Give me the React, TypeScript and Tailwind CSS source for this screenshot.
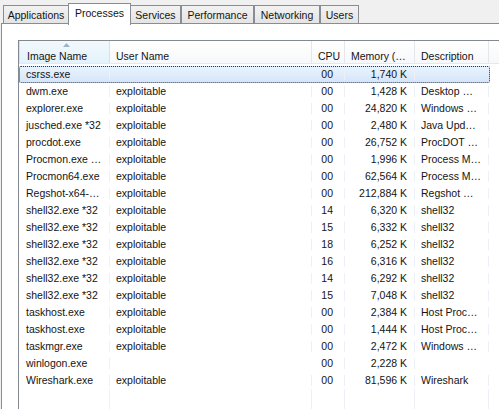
import React from 'react';

// Windows 7 Task Manager – Processes tab

type Proc = {
  image: string;
  user: string;
  cpu: string;
  mem: string;
  desc: string;
};

const PROCS: Proc[] = [
  { image: 'csrss.exe', user: '', cpu: '00', mem: '1,740 K', desc: '' },
  { image: 'dwm.exe', user: 'exploitable', cpu: '00', mem: '1,428 K', desc: 'Desktop …' },
  { image: 'explorer.exe', user: 'exploitable', cpu: '00', mem: '24,820 K', desc: 'Windows …' },
  { image: 'jusched.exe *32', user: 'exploitable', cpu: '00', mem: '2,480 K', desc: 'Java Upd…' },
  { image: 'procdot.exe', user: 'exploitable', cpu: '00', mem: '26,752 K', desc: 'ProcDOT …' },
  { image: 'Procmon.exe …', user: 'exploitable', cpu: '00', mem: '1,996 K', desc: 'Process M…' },
  { image: 'Procmon64.exe', user: 'exploitable', cpu: '00', mem: '62,564 K', desc: 'Process M…' },
  { image: 'Regshot-x64-…', user: 'exploitable', cpu: '00', mem: '212,884 K', desc: 'Regshot …' },
  { image: 'shell32.exe *32', user: 'exploitable', cpu: '14', mem: '6,320 K', desc: 'shell32' },
  { image: 'shell32.exe *32', user: 'exploitable', cpu: '15', mem: '6,332 K', desc: 'shell32' },
  { image: 'shell32.exe *32', user: 'exploitable', cpu: '18', mem: '6,252 K', desc: 'shell32' },
  { image: 'shell32.exe *32', user: 'exploitable', cpu: '16', mem: '6,316 K', desc: 'shell32' },
  { image: 'shell32.exe *32', user: 'exploitable', cpu: '14', mem: '6,292 K', desc: 'shell32' },
  { image: 'shell32.exe *32', user: 'exploitable', cpu: '15', mem: '7,048 K', desc: 'shell32' },
  { image: 'taskhost.exe', user: 'exploitable', cpu: '00', mem: '2,384 K', desc: 'Host Proc…' },
  { image: 'taskhost.exe', user: 'exploitable', cpu: '00', mem: '1,444 K', desc: 'Host Proc…' },
  { image: 'taskmgr.exe', user: 'exploitable', cpu: '00', mem: '2,472 K', desc: 'Windows …' },
  { image: 'winlogon.exe', user: '', cpu: '00', mem: '2,228 K', desc: '' },
  { image: 'Wireshark.exe', user: 'exploitable', cpu: '00', mem: '81,596 K', desc: 'Wireshark' },
];

const TABS = [
  { label: 'Applications', w: 'w-[66px]' },
  { label: 'Processes', w: 'w-[63px]' },
  { label: 'Services', w: 'w-[51px]' },
  { label: 'Performance', w: 'w-[73px]' },
  { label: 'Networking', w: 'w-[66px]' },
  { label: 'Users', w: 'w-[39px]' },
];

const Tab = ({ label, w, active }: { label: string; w: string; active?: boolean }) =>
  active ? (
    <div
      className={`${w} -ml-[1px] -mr-[1px] relative z-10 h-[22px] -mb-[1px] flex items-start justify-center pt-[4px] border border-b-0 border-[#898c95] bg-white`}
    >
      {label}
    </div>
  ) : (
    <div
      className={`${w} mt-[2px] h-[19px] flex items-start justify-center pt-[4px] border border-b-0 border-[#898c95] bg-gradient-to-b from-[#f2f2f2] to-[#e3e3e3]`}
    >
      {label}
    </div>
  );

const ListHeader = () => (
  <div className="flex h-[23px] bg-gradient-to-b from-white to-[#f7f8fa] border-b border-[#e6e8eb]">
    <div className="relative w-[91px] shrink-0 flex items-end pb-[2px] pl-[7px] bg-gradient-to-b from-[#f2f9fd] to-[#e3f2fb] border-r border-l border-[#c7e6f7]">
      <svg className="absolute left-[43px] top-[2px]" width="7" height="4" viewBox="0 0 7 4">
        <path d="M0 4 L3.5 0 L7 4 Z" fill="#9fb3c8" />
      </svg>
      Image Name
    </div>
    <div className="w-[202px] shrink-0 flex items-end pb-[2px] pl-[6px] border-r border-[#e3e7ec]">User Name</div>
    <div className="w-[33px] shrink-0 flex items-end justify-center pb-[2px] pl-[2px] border-r border-[#e3e7ec]">CPU</div>
    <div className="w-[70px] shrink-0 flex items-end pb-[2px] pl-[6px] border-r border-[#e3e7ec]">Memory (…</div>
    <div className="w-[74px] shrink-0 flex items-end pb-[2px] pl-[6px] border-r border-[#e3e7ec]">Description</div>
    <div className="flex-1" />
  </div>
);

const cell = 'shrink-0 border-r border-[#edf1f7] whitespace-nowrap overflow-hidden';

const Row = ({ p, selected }: { p: Proc; selected?: boolean }) => (
  <div
    className={
      selected
        ? 'flex h-[17px] items-center w-[471px] rounded-[2px] border border-dotted border-[#2a3550] bg-gradient-to-b from-[#eaf3fd] to-[#d5e6fb]'
        : 'flex h-[17px] items-center w-[471px] border border-transparent'
    }
  >
    <div className={`${cell} w-[90px] pl-[6px]`}>{p.image}</div>
    <div className={`${cell} w-[202px] pl-[6px]`}>{p.user}</div>
    <div className={`${cell} w-[33px] pr-[11px] text-right`}>{p.cpu}</div>
    <div className={`${cell} w-[70px] pr-[7px] text-right`}>{p.mem}</div>
    <div className={`${cell} w-[74px] pl-[6px] ${selected ? 'border-r-0' : ''}`}>{p.desc}</div>
  </div>
);

export default function App() {
  return (
    <div
      className="w-[499px] h-[409px] overflow-hidden bg-[#f0f0f0] flex flex-col text-[10.5px] leading-none text-[#141414]"
      style={{ fontFamily: '"Liberation Sans", Arial, sans-serif' }}
    >
      {/* tab strip */}
      <div className="flex pl-[3px] pt-[3px] h-[23px] shrink-0">
        {TABS.map((t, i) => (
          <Tab key={t.label} label={t.label} w={t.w} active={i === 1} />
        ))}
      </div>

      {/* tab page */}
      <div className="flex-1 ml-[1px] bg-white border-t border-l border-[#898c95] pl-[16px] pt-[16px] flex flex-col min-h-0">
        <div className="flex-1 border-t border-l border-[#828790] flex flex-col min-h-0">
          <ListHeader />
          <div className="pt-[2px] flex flex-col flex-1 min-h-0">
            {PROCS.map((p, i) => (
              <Row key={i} p={p} selected={i === 0} />
            ))}
            <div className="flex flex-1 pl-[1px]">
              <div className={`${cell} w-[90px]`} />
              <div className={`${cell} w-[202px]`} />
              <div className={`${cell} w-[33px]`} />
              <div className={`${cell} w-[70px]`} />
              <div className={`${cell} w-[74px]`} />
            </div>
          </div>
        </div>
      </div>
    </div>
  );
}
